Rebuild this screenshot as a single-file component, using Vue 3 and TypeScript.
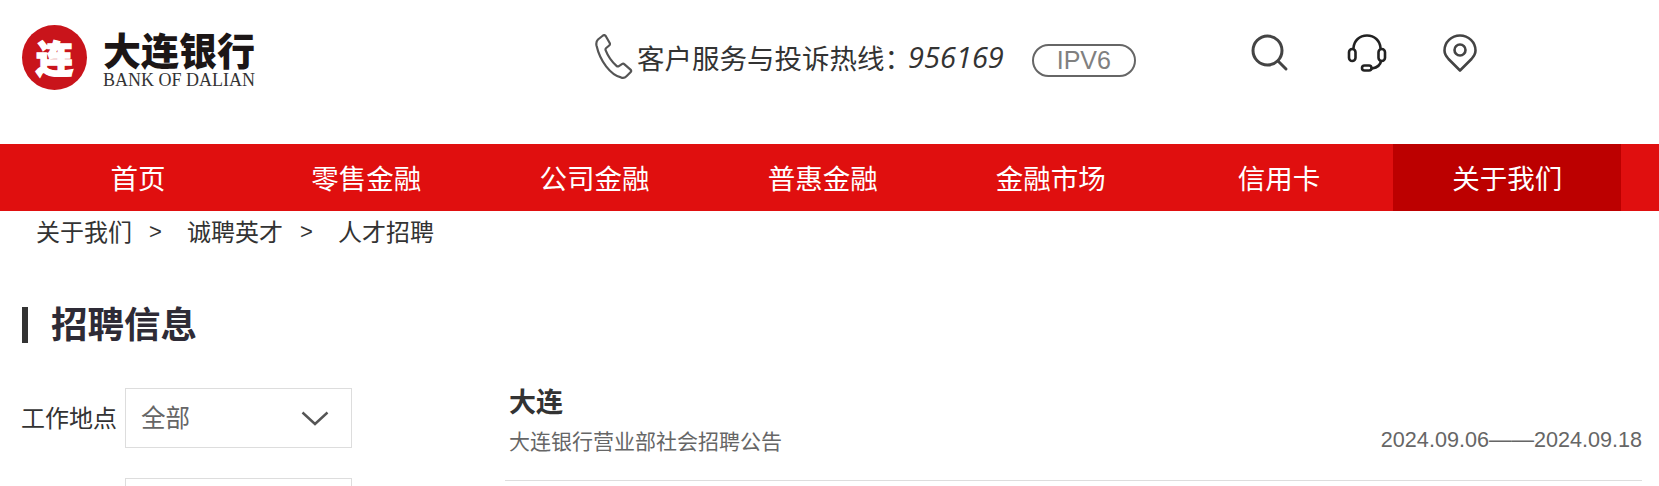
<script setup lang="ts">
const navItems = ["首页", "零售金融", "公司金融", "普惠金融", "金融市场", "信用卡", "关于我们"];
const crumbs = ["关于我们", "诚聘英才", "人才招聘"];
</script>

<template>
  <div class="page">
    <header class="top">
      <div class="logo">
        <div class="logo-mark"><span>连</span></div>
        <div class="logo-text">
          <div class="logo-cn">大连银行</div>
          <div class="logo-en">BANK OF DALIAN</div>
        </div>
      </div>

      <div class="hotline">
        <svg class="phone" width="39" height="46" viewBox="0 0 39 46" fill="none" stroke="#555" stroke-width="2.2" stroke-linejoin="round">
          <path d="M3 5.5 8 1.5c1-.7 2-.5 2.700.5l4 7c.5 1 .3 1.800-.5 2.500l-3 2.500c-.8.7-.9 1.400-.5 2.400 2.300 6 5.800 11 10.800 15.500.8.7 1.500.8 2.400.2l3-2c.9-.6 1.800-.5 2.600.2l6 5.300c.8.800.8 1.800 0 2.600l-4 4c-1.500 1.500-3.500 2-5.500 1.200C15.500 41 5 27 1.500 11.500 1 9 1.500 7 3 5.500Z" />
        </svg>
        <span class="hotline-label">客户服务与投诉热线：</span>
        <span class="hotline-num">956169</span>
        <span class="ipv6">IPV6</span>
      </div>

      <div class="tools">
        <svg width="38" height="38" viewBox="0 0 38 38" fill="none" stroke="#444" stroke-width="3" stroke-linecap="round">
          <circle cx="16.500" cy="16.500" r="14.500" />
          <path d="M27 27l8 8" />
        </svg>
        <svg width="40" height="38" viewBox="0 0 40 38" fill="none" stroke="#222" stroke-width="2.600" stroke-linecap="round">
          <path d="M6.500 14C7 6.500 12.500 1.500 20 1.500S33 6.500 33.500 14" />
          <rect x="2" y="15" width="6.500" height="12" rx="3.250" />
          <rect x="31.500" y="15" width="6.500" height="12" rx="3.250" />
          <path d="M34 27c-.5 4-4 6.500-9 7.500" />
          <rect x="15" y="31.500" width="9.500" height="5" rx="2.500" />
        </svg>
        <svg class="pin" width="34" height="38" viewBox="0 0 34 38" fill="none" stroke="#444" stroke-width="2.600" stroke-linejoin="round">
          <path d="M17 36.500 5.500 25C2.800 22 1.500 19.500 1.500 16.500a15.500 15 0 0 1 31 0c0 3-1.300 5.500-4 8.500Z" />
          <circle cx="17" cy="16" r="5.500" />
        </svg>
      </div>
    </header>

    <nav class="nav">
      <a v-for="(item, i) in navItems" :key="item" class="nav-item" :class="{ active: i === navItems.length - 1 }">{{ item }}</a>
    </nav>

    <div class="crumbs">
      <template v-for="(c, i) in crumbs" :key="c">
        <span v-if="i > 0" class="sep">&gt;</span>
        <span>{{ c }}</span>
      </template>
    </div>

    <h2 class="title"><span>招聘信息</span></h2>

    <div class="content">
      <aside class="filters">
        <div class="filter">
          <label>工作地点</label>
          <div class="select">
            <span>全部</span>
            <svg width="28" height="15" viewBox="0 0 28 15" fill="none" stroke="#555" stroke-width="2.400"><path d="M1.500 1.500 14 13 26.500 1.500" /></svg>
          </div>
        </div>
        <div class="filter">
          <label></label>
          <div class="select"></div>
        </div>
      </aside>

      <section class="jobs">
        <div class="job">
          <h3>大连</h3>
          <div class="job-row">
            <span class="job-name">大连银行营业部社会招聘公告</span>
            <span class="job-date">2024.09.06<span class="dash">——</span>2024.09.18</span>
          </div>
        </div>
      </section>
    </div>
  </div>
</template>

<style>
html,
body {
  margin: 0;
  height: 486px;
  overflow: hidden;
  background: #fff;
}
</style>

<style scoped>
.page {
  width: 1659px;
  height: 486px;
  overflow: hidden;
  font-family: "Noto Sans CJK SC", "Noto Sans", sans-serif;
  color: #333;
}

.top {
  height: 144px;
  display: flex;
  align-items: flex-start;
  padding-left: 22px;
  box-sizing: border-box;
}

.logo {
  display: flex;
  width: 573px;
  padding-top: 25px;
}

.logo-mark {
  width: 65px;
  height: 65px;
  border-radius: 50%;
  background: #c9141b;
  color: #fff;
  display: flex;
  align-items: center;
  justify-content: center;
  font-size: 37px;
  font-weight: 900;
  line-height: 1;
  -webkit-text-stroke: 1.500px #fff;
}

.logo-text {
  margin-left: 16px;
  margin-top: 5px;
  color: #1c1616;
}

.logo-cn {
  font-size: 38px;
  font-weight: 900;
  line-height: 38px;
  white-space: nowrap;
}

.logo-en {
  font-family: "Liberation Serif", serif;
  font-size: 18px;
  line-height: 16px;
  margin-top: 4px;
  white-space: nowrap;
  color: #333;
}

.hotline {
  display: flex;
  align-items: center;
  width: 657px;
  height: 46px;
  margin-top: 34px;
}

.phone {
  flex: none;
}

.hotline-label {
  font-size: 27.500px;
  margin-left: 3px;
  white-space: nowrap;
}

.hotline-num {
  font-family: "Open Sans", sans-serif;
  font-style: italic;
  font-size: 29px;
  margin-left: -4px;
  margin-top: -2px;
}

.ipv6 {
  margin-left: 28px;
  margin-top: 6px;
  width: 104px;
  height: 33px;
  box-sizing: border-box;
  border: 2px solid #666;
  border-radius: 17px;
  font-family: "Liberation Sans", sans-serif;
  font-size: 25px;
  line-height: 28px;
  color: #808080;
  text-align: center;
}

.tools {
  display: flex;
  gap: 58px;
  margin-top: 34px;
  margin-left: -1px;
}

.pin {
  margin-left: -2px;
}

.nav {
  height: 67px;
  background: #e00f0f;
  display: grid;
  grid-template-columns: repeat(7, 228.200px);
  padding-left: 24px;
}

.nav-item {
  color: #fff;
  font-size: 27.500px;
  line-height: 67px;
  text-align: center;
}

.nav-item.active {
  background: #bc0000;
}

.crumbs {
  display: flex;
  align-items: center;
  height: 38px;
  padding-left: 36px;
  font-size: 24px;
}

.sep {
  font-family: "Liberation Sans", sans-serif;
  font-size: 22px;
  width: 55px;
  padding-right: 8px;
  margin-top: 4px;
  box-sizing: border-box;
  text-align: center;
}

.title {
  margin: 58px 0 0 22px;
  padding-left: 23px;
  height: 36px;
  border-left: 6px solid #333;
  font-size: 36.500px;
  font-weight: 700;
  line-height: 32px;
  color: #2e2b36;
}

.content {
  display: flex;
  margin-top: 45px;
  padding-left: 22px;
}

.filters {
  width: 483px;
  flex: none;
}

.filter {
  display: flex;
  align-items: center;
  margin-bottom: 30px;
}

.filter label {
  width: 103px;
  margin-left: -1px;
  margin-right: 1px;
  padding-bottom: 4px;
  font-size: 24px;
  white-space: nowrap;
}

.select {
  width: 227px;
  height: 60px;
  box-sizing: border-box;
  border: 1px solid #ddd;
  display: flex;
  align-items: center;
  justify-content: space-between;
  padding: 0 22px 0 15px;
  font-size: 24.500px;
  color: #666;
}

.select span {
  margin-top: -4px;
}

.jobs {
  width: 1137px;
}

.job {
  height: 95px;
  box-sizing: border-box;
  border-bottom: 1px solid #ddd;
  padding-left: 4px;
}

.job h3 {
  margin: -2px 0 0;
  font-size: 27px;
  font-weight: 700;
  line-height: 30px;
  color: #333;
}

.job-row {
  display: flex;
  align-items: center;
  justify-content: space-between;
  margin-top: 9px;
  line-height: 30px;
  color: #666;
}

.job-name {
  font-size: 21px;
}

.job-date {
  font-family: "Liberation Sans", sans-serif;
  font-size: 21.600px;
}

.dash {
  font-size: 22.500px;
}
</style>
